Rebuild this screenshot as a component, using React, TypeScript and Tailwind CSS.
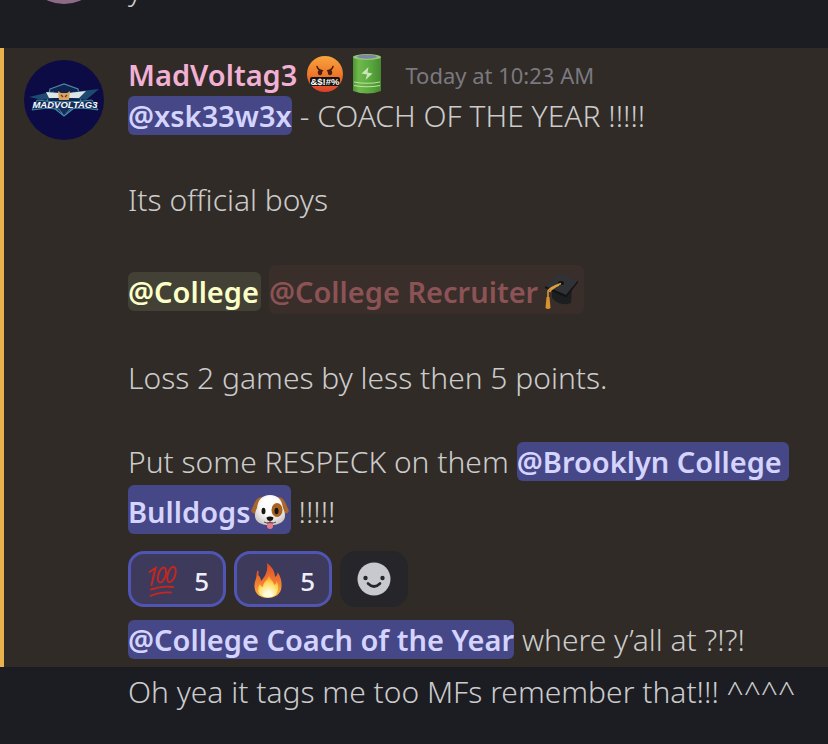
import React from "react";

function CursingFace() {
  return (
    <svg viewBox="0 0 36 38" className="h-[38px] w-9 shrink-0" role="img" aria-label="cursing face">
      <defs>
        <linearGradient id="curse" x1="0" y1="0" x2="0" y2="1">
          <stop offset="0" stopColor="#f9a43c" />
          <stop offset="0.5" stopColor="#ee7a2c" />
          <stop offset="1" stopColor="#d8402a" />
        </linearGradient>
      </defs>
      <circle cx="18" cy="19" r="18" fill="url(#curse)" />
      <path d="M10 11.5Q11 15 15.500 15.800M26 11.500Q25 15 20.500 15.800" stroke="#4a1d10" strokeWidth="1.500" fill="none" strokeLinecap="round" />
      <ellipse cx="13" cy="17.500" rx="2.200" ry="2.700" fill="#4a1d10" />
      <ellipse cx="23" cy="17.500" rx="2.200" ry="2.700" fill="#4a1d10" />
      <rect x="3" y="22" width="30" height="9" rx="2" fill="#17130f" />
      <text x="18" y="30" textAnchor="middle" fontSize="9.500" fontWeight="700" fill="#fff" fontFamily="'Liberation Sans', sans-serif">&amp;$!#%</text>
    </svg>
  );
}

function Battery() {
  return (
    <svg viewBox="0 0 28 40" className="h-10 w-7 shrink-0" role="img" aria-label="battery">
      <defs>
        <linearGradient id="cell" x1="0" y1="0" x2="1" y2="0">
          <stop offset="0" stopColor="#4d9434" />
          <stop offset="0.200" stopColor="#6fb94c" />
          <stop offset="0.650" stopColor="#5aa63e" />
          <stop offset="1" stopColor="#468a30" />
        </linearGradient>
      </defs>
      <path d="M0 3V37Q14 42 28 37V3Z" fill="url(#cell)" />
      <ellipse cx="14" cy="3" rx="14" ry="3" fill="#93c47a" />
      <ellipse cx="14" cy="2.700" rx="10" ry="2" fill="#7d86a0" />
      <path d="M1 28Q14 30.500 27 28M1 31.500Q14 34 27 31.500" stroke="#b9e39b" strokeWidth="1.200" fill="none" />
      <path d="M15.500 13L8.500 19.500L14 20.500L12.500 26L19.500 19.500L14.500 18.500Z" fill="#c9e6b6" />
    </svg>
  );
}

function GraduationCap() {
  return (
    <svg viewBox="0 0 36 40" className="h-10 w-9 shrink-0" role="img" aria-label="graduation cap">
      <path d="M9 19V27Q17 36 28 32L29 17Z" fill="#1d1e20" />
      <path d="M17 2L35 9.500L23 24L2 15Z" fill="#303236" />
      <path d="M2 15L23 24L35 9.500V11.500L23 26.500L2 17Z" fill="#121315" />
      <ellipse cx="18" cy="12" rx="3" ry="2" fill="#111214" />
      <path d="M18 12.500Q6 17 5 20V28M16 14Q9 17 6.500 21" stroke="#e0a13b" strokeWidth="1.500" fill="none" />
      <path d="M3.500 26H6.500L7.500 37Q5 39 2.500 37Z" fill="#d9922f" />
    </svg>
  );
}

function DogFace() {
  return (
    <svg viewBox="0 0 38 36" className="h-9 w-[38px] shrink-0" role="img" aria-label="dog face">
      <defs>
        <radialGradient id="fur" cx="0.500" cy="0.350" r="0.700">
          <stop offset="0.400" stopColor="#ffffff" />
          <stop offset="1" stopColor="#c9c2bd" />
        </radialGradient>
      </defs>
      <path d="M11 3Q6 3 3.500 9L0 17Q2 21 6 19L13 8ZM27 3Q32 3 34.500 9L38 17Q36 21 32 19L25 8Z" fill="#a9682b" />
      <path d="M19 1C27 1 31 6 32 14C37 24 33 31 19 31C5 31 1 24 6 14C7 6 11 1 19 1Z" fill="url(#fur)" />
      <ellipse cx="26" cy="16" rx="5.500" ry="7" fill="#a66324" />
      <ellipse cx="12.500" cy="17" rx="2" ry="3.200" fill="#191412" />
      <ellipse cx="25.500" cy="17" rx="2" ry="3.200" fill="#191412" />
      <path d="M16 28H22V32Q22 35 19 35Q16 35 16 32Z" fill="#e57b8c" />
      <path d="M15.500 23.500Q19 21.500 22.500 23.500Q22 27 19 27Q16 27 15.500 23.500Z" fill="#16110f" />
      <path d="M19 26V28.500M19 28.500Q16 30 13 28M19 28.500Q22 30 25 28" stroke="#4d3b38" strokeWidth="0.900" fill="none" />
    </svg>
  );
}

function Hundred() {
  return (
    <svg viewBox="0 0 30 32" className="h-8 w-[30px] shrink-0" role="img" aria-label="hundred points" fill="none" stroke="#c9271e" strokeLinecap="round">
      <path d="M1.500 7L7.500 3L3.500 20" strokeWidth="2" />
      <ellipse cx="14" cy="10" rx="3.600" ry="7.800" transform="rotate(18 14 10)" strokeWidth="1.900" />
      <ellipse cx="23.500" cy="9.500" rx="3.700" ry="8" transform="rotate(18 23.500 9.500)" strokeWidth="1.900" />
      <path d="M3 24.500Q14 20.500 25 22" strokeWidth="1.900" />
      <path d="M2.500 31Q12 26.500 23 27.500" strokeWidth="1.800" />
    </svg>
  );
}

function Fire() {
  return (
    <svg viewBox="0 0 28 36" className="h-9 w-7 shrink-0" role="img" aria-label="fire">
      <defs>
        <linearGradient id="flame" x1="0" y1="0" x2="0" y2="1">
          <stop offset="0" stopColor="#dd4b28" />
          <stop offset="0.550" stopColor="#f27a30" />
          <stop offset="1" stopColor="#fbbc45" />
        </linearGradient>
        <radialGradient id="core" cx="0.500" cy="0.900" r="0.800">
          <stop offset="0.200" stopColor="#fffce0" />
          <stop offset="0.700" stopColor="#fdd751" />
          <stop offset="1" stopColor="#f89a38" />
        </radialGradient>
      </defs>
      <path d="M13 0C19 5 21 9 21 14C23 13 23.500 11 23.500 9C27 14 28 19 27.500 24C27 31 21 35 14 35C6 35 1 31 0.500 24C0 18 3 16 2.500 11C5 12 7 15 7 18C12 13 14 7 13 0Z" fill="url(#flame)" />
      <path d="M15 12C16 17 20 18 20 22C22 21 22.500 20 22.500 18C25 22 25 28 21.500 32Q14 37 6.500 32C3 28 4 24 6 21C6.500 23 8 24 9 24C9 19 14 17 15 12Z" fill="url(#core)" />
      <path d="M4 7Q1.500 10 3.500 13Q5.500 11 4 7Z" fill="#e3562a" />
    </svg>
  );
}

function Smiley() {
  return (
    <svg viewBox="0 0 34 34" className="size-[34px]" aria-hidden="true">
      <circle cx="17" cy="17" r="16.500" fill="#c8c8cf" />
      <circle cx="8.500" cy="16" r="2.200" fill="#26262c" />
      <circle cx="25.500" cy="16" r="2.200" fill="#26262c" />
      <path d="M11 21.500Q17 27.500 23 21.500" stroke="#26262c" strokeWidth="2.600" fill="none" strokeLinecap="round" />
    </svg>
  );
}

function Avatar() {
  return (
    <svg viewBox="0 0 80 80" className="size-20" role="img" aria-label="MadVoltag3 avatar">
      <circle cx="40" cy="40" r="40" fill="#0d0b45" />
      <path d="M26 29L40 24L54 29L57 41L50 48L40 56L30 48L23 41Z" fill="#10234f" stroke="#4c86a4" strokeWidth="1.200" />
      <path d="M5 37L30 31V38L18 40ZM75 29L48 32V38L62 40Z" fill="#1d4a6e" />
      <path d="M22 32L36 33V38H25ZM62 31L44 33V38H55Z" fill="#dce6e6" />
      <path d="M34 31L37 33H43L46 31L45 40H35Z" fill="#d9a25d" />
      <path d="M37 35L39 37M43 35L41 37" stroke="#683b31" strokeWidth="1.200" />
      <path d="M8 50L13 40Q40 44 68 40L74 50Q58 47 46 49L40 56L35 49Q22 47 8 50Z" fill="#152b58" stroke="#4ba2b5" strokeWidth="0.800" />
      <text x="41" y="48" textAnchor="middle" fontSize="9.500" fontWeight="700" fontStyle="italic" fill="#f4f7ff" fontFamily="'Liberation Sans', sans-serif">MADVOLTAG3</text>
    </svg>
  );
}

function Mention({ children }: { children: React.ReactNode }) {
  return (
    <a href="#mention" className="flex h-[39px] items-center rounded-md bg-[#464787] text-[29px] font-semibold text-[#d4d4ff]">
      {children}
    </a>
  );
}

function Line({ children }: { children: React.ReactNode }) {
  return <p className="flex h-[42px] items-center gap-2 pb-[3px] whitespace-pre">{children}</p>;
}

function Reaction({ icon, label, count }: { icon: React.ReactNode; label: string; count: number }) {
  return (
    <button aria-label={label} className="flex h-14 w-[98px] items-center justify-between rounded-2xl border-3 border-[#5054b2] bg-[#3d3a5b] pt-1 pr-[14px] pl-[17px] text-[26px] font-medium text-[#eeedfa]">
      {icon}
      <span>{count}</span>
    </button>
  );
}

export default function App() {
  return (
    <main className="min-h-screen overflow-x-hidden bg-[#1c1d22] font-['Noto_Sans',sans-serif] text-[30px] leading-[39px] font-light text-[#cccbcc]">
      <section className="flex h-12 items-start gap-6 overflow-hidden pl-6">
        <div className="flex w-20 shrink-0 justify-center">
          <div className="-mt-[76px] size-20 rounded-full bg-[#8d6b87]" />
        </div>
        <p className="-mt-[31px]">you lost it ?</p>
      </section>

      <article className="border-l-4 border-[#e9b24c] bg-[#302b26] pb-[5px]">
        <div className="flex gap-6 pt-3 pl-5">
          <div className="shrink-0"><Avatar /></div>
          <div className="min-w-0">
            <header className="-mt-2 flex h-11 items-center">
              <h2 className="text-[29px] font-semibold text-[#f2b1d4]">MadVoltag3</h2>
              <span className="ml-[10px] flex items-center gap-[10px]">
                <CursingFace />
                <Battery />
              </span>
              <time className="ml-6 pt-[2px] text-[22px] font-normal text-[#7b7980]">Today at 10:23 AM</time>
            </header>
            <Line><Mention>@xsk33w3x</Mention><span>- COACH OF THE YEAR !!!!!</span></Line>
            <div className="mt-[42px]"><Line>Its official boys</Line></div>
            <p className="mt-[42px] flex h-[52px] items-center gap-2 pb-[2px] text-[29px]">
              <a href="#college" className="mt-1 flex h-[39px] items-center rounded-md bg-[#434035] pr-[2px] font-semibold text-[#fbffc7]">@College</a>
              <a href="#recruiter" className="flex h-[49px] items-center gap-[5px] rounded-md bg-[#392e29] pt-1 pr-[5px] font-semibold text-[#8b5355]">@College Recruiter<GraduationCap /></a>
            </p>
            <div className="mt-[42px]"><Line>Loss 2 games by less then 5 points.</Line></div>
            <div className="mt-[42px]">
              <Line><span>Put some RESPECK on them</span><Mention>{"@Brooklyn College "}</Mention></Line>
            </div>
            <p className="flex h-[51px] items-center gap-2">
              <a href="#bulldogs" className="flex h-[49px] items-center rounded-md bg-[#464787] pt-1 pr-[2px] text-[29px] font-semibold text-[#d4d4ff]">Bulldogs<DogFace /></a>
              <span className="pt-1">!!!!!</span>
            </p>
            <div className="mt-4 flex gap-2">
              <Reaction icon={<Hundred />} label="Hundred points, 5 reactions" count={5} />
              <Reaction icon={<Fire />} label="Fire, 5 reactions" count={5} />
              <button aria-label="Add reaction" className="flex h-14 w-[68px] items-center justify-center rounded-2xl bg-[#26252a]"><Smiley /></button>
            </div>
            <div className="mt-[13px]"><Line><Mention>@College Coach of the Year</Mention><span>where y’all at ?!?!</span></Line></div>
          </div>
        </div>
      </article>

      <article className="pt-[5px] pl-32"><Line>Oh yea it tags me too MFs remember that!!! ^^^^</Line></article>
    </main>
  );
}
